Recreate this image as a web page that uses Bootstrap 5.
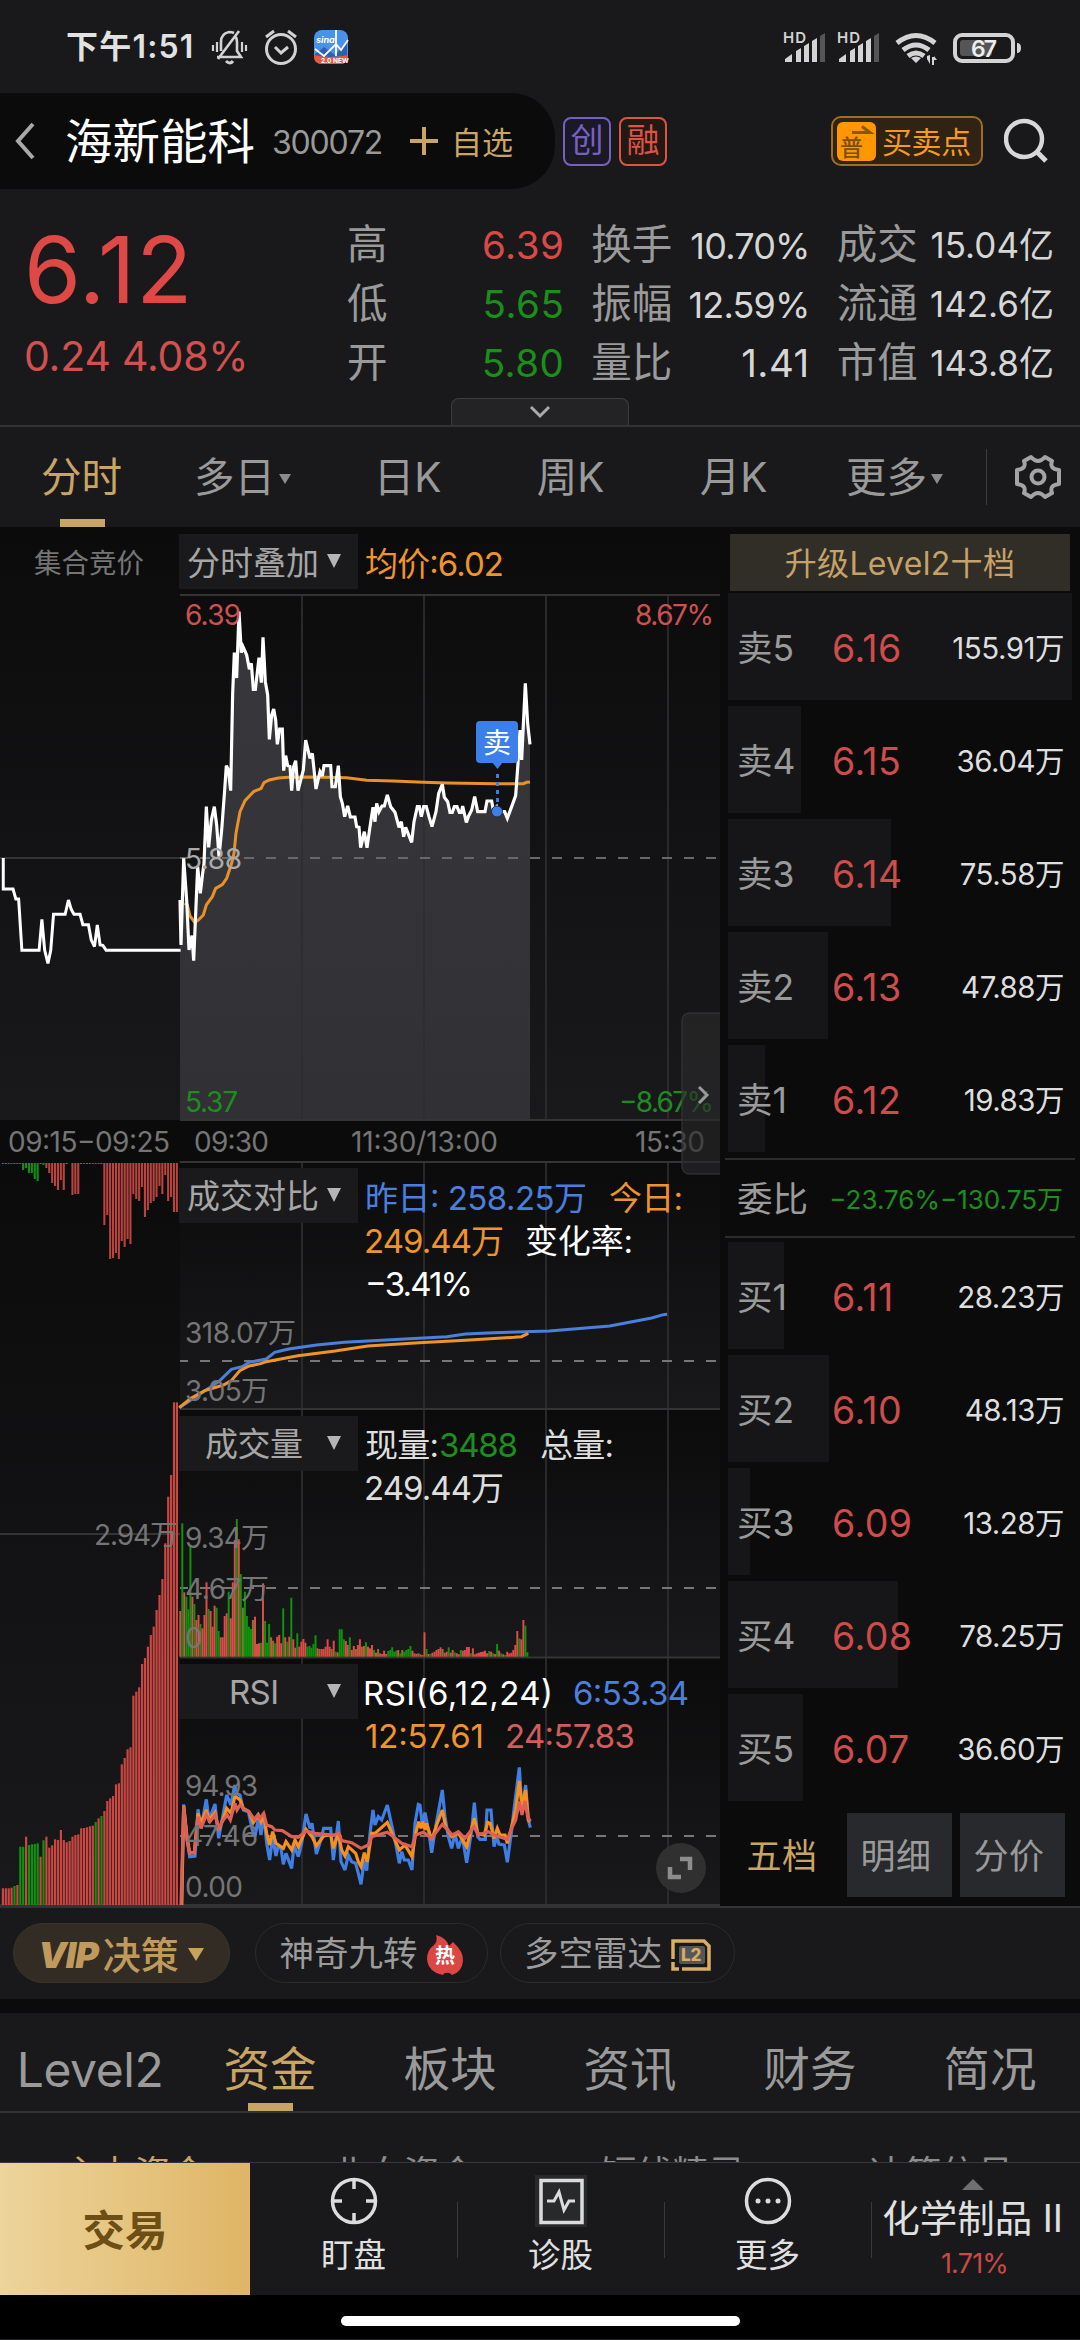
<!DOCTYPE html>
<html lang="zh-CN" data-bs-theme="dark">
<head>
<meta charset="utf-8">
<meta name="viewport" content="width=device-width, initial-scale=1">
<title>海新能科 300072</title>
<link href="https://cdn.jsdelivr.net/npm/bootstrap@5.3.0/dist/css/bootstrap.min.css" rel="stylesheet">
<style>
:root{--panel:#19191b;--deep:#0b0b0b;--gold:#c9a563;--up:#d94a47;--down:#1a8f1a;--muted:#9a9a9a;--rule:#333335}
body{width:1080px;height:2340px;overflow:hidden;background:var(--panel);color:#d6d6d6;font-family:Inter,"Noto Sans CJK SC",sans-serif;line-height:1}
svg{display:block;flex:none}
.up{color:var(--up)}.down{color:var(--down)}
.statusbar{height:93px;padding:1px 59px 0 66px}
.clock{font-size:32px;font-weight:600;color:#e2e2e2;letter-spacing:1.2px;width:142px;white-space:nowrap}
.titlebar{height:96px}
.title-pill{width:555px;background:#0b0b0b;border-radius:0 44px 44px 0;padding-left:14px;white-space:nowrap}
.stock-name{font-size:47.5px;color:#fff;margin-left:29px;width:207px;padding-top:2px}
.stock-code{font-size:32px;color:#999;width:138px;letter-spacing:-1.2px;padding-top:3px}
.watch{font-size:31px;margin-left:13px;padding-top:2px}
.tagbox{width:48px;height:49px;border:2px solid;border-radius:8px;font-size:33px;display:flex;align-items:center;justify-content:center;padding-bottom:1px}
.tag-c{color:#7562c0;background:#1b1926}.tag-r{color:#dc5541;background:#241817}
.trade-btn{width:152px;height:50px;border:2px solid #a06d22;border-radius:10px;background:#302314;color:#f79a1b;font-size:30px;letter-spacing:-.4px;padding:1px 0 0 4px;margin-right:21px}
.quote{height:236px;padding:24px 26px 0}
.price{font-size:92px;color:#de4946;letter-spacing:.8px;height:110px;line-height:110px;margin:2px 0 0 -2px}
.change{font-size:41px;color:#d2514e;letter-spacing:-.2px;margin:11px 0 0 -2px;white-space:pre}
.q-left{width:322px}
.q-col{font-size:38.5px;letter-spacing:.5px}
.q-col>div{height:59px;display:flex;justify-content:space-between;align-items:center;white-space:nowrap}
.q-col span:first-child{font-size:40.5px;letter-spacing:0;color:var(--muted)}
.q-col .sm36{font-size:36px;letter-spacing:-.8px}
.q-col .yi{font-size:35px;letter-spacing:0}
.expander{left:451px;bottom:0;width:178px;height:27px;border:1px solid #3c3c3e;border-bottom:0;border-radius:8px 8px 0 0;background:#232325}
.period{height:102px;border-top:2px solid var(--rule);font-size:40.5px;color:var(--muted)}
.period .tab{width:163px;position:relative;display:flex;align-items:center;justify-content:center;padding-top:3px}
.underbar::after{content:"";position:absolute;left:50%;bottom:0;width:45px;height:8px;margin-left:-22px;background:var(--gold)}
.caret{width:0;height:0;border:6px solid transparent;border-top:10px solid #8c8c8c;border-bottom:0;margin:0 4px 0 4px}
.board{height:1379px;background:var(--deep)}
.book{width:360px;padding:7px 8px 0;color:#dedede}
.upgrade{height:57px;margin:0 2px 2px;background:#312e28;color:#c6a168;font-size:32px;padding-top:2px;letter-spacing:.3px}
.lvl{height:107px;margin-bottom:6px;position:relative;padding:4px 8px 0 9px;font-size:29.5px}
.lvl i{position:absolute;left:0;top:0;bottom:0;background:#161618}
.lvl span{position:relative;white-space:nowrap}
.lvl .nm{width:95px;font-size:35.5px;color:var(--muted)}
.lvl .pr{font-size:37.5px;color:#ce4c49;letter-spacing:.4px;flex:1}
.lvl .vo{letter-spacing:-.5px}
.bidask{height:80px;border:solid #2c2c2e;border-width:2px 0;margin:1px -3px 4px;padding:4px 12px 0;font-size:26px;white-space:nowrap}
.bidask .nm{width:96px;font-size:35.5px;color:var(--muted)}
.book-tab{width:105px;height:84px;font-size:35px;letter-spacing:.6px;color:var(--muted);padding:3px 5px 0 0}
.book-tab.boxed{background:#28292d;padding-right:7px}
.gold,.book-tab.gold{color:var(--gold)}
.chips{height:93px;border-top:2px solid #333336;padding:15px 13px 0}
.chip{height:60px;border-radius:30px;border:1px solid #2b2b2e;font-size:34.5px;color:#9c9c9c;white-space:nowrap;padding-top:3px}
.chip.vip{width:217px;background:#322c24;color:#bf9a5c;border-color:#3c3324;margin-right:25px;font-weight:500;font-size:38px}
.vip b{font-style:italic;font-weight:900;font-size:36px;letter-spacing:-1px;margin-right:5px}
.sections{height:114px;border-top:14px solid var(--deep);border-bottom:2px solid var(--rule);font-size:46.5px;color:var(--muted)}
.sections .tab{width:180px;position:relative;display:flex;align-items:center;justify-content:center;padding-top:15px}
.sections .lv{font-size:48px;letter-spacing:-.4px;white-space:nowrap}
.subs{height:49px;overflow:hidden;font-size:36px;color:#8c8c8c;padding-top:43px}
.subs div{width:269px;text-align:center}
.dock{height:133px;border-top:1px solid #39393b;font-size:32.5px;color:#e0e0e0}
.deal{width:250px;background:linear-gradient(90deg,#edd49b,#dfb566);color:#6d4e15;font-size:42.5px;font-weight:700;padding-top:4px}
.dock-item{width:207px;position:relative;padding-top:12px;white-space:nowrap}
.dock-item+.dock-item::before{content:"";position:absolute;left:0;top:39px;width:1px;height:56px;background:#39393b}
.dock-label{margin-top:13px}
.home{height:44px;background:#000}
.home div{width:399px;height:10px;border-radius:5px;background:#fff;margin:21px auto 0}
</style>
<script src="https://cdn.jsdelivr.net/npm/bootstrap@5.3.0/dist/js/bootstrap.bundle.min.js"></script>
</head>
<body>
<header class="statusbar d-flex align-items-center">
  <div class="clock">下午1:51</div>
  <svg width="142" height="40" viewBox="0 0 142 40" fill="none" stroke="#d2d2d2" stroke-width="3">
    <path d="M9 30h24l-4-6V15c0-3-1-5-2-6M13 24V15c0-6 3-9 8-10q3 0 5 1M10 32L31 4" stroke-width="2.6"/><path d="M18 34q4 4 7 0"/><path d="M9 15v10M5 18v6M34 15v10M38 18v6" stroke-width="2.2"/>
    <circle cx="73" cy="22" r="14.5"/><path d="M58 10l8-6M88 10l-8-6M67 20l6 6 7-6"/>
    <g stroke="none"><rect x="106" y="3" width="34" height="34" rx="8" fill="#4a91ee"/><path d="M107 27l9-7 11 8 12-13v14l-32 2z" fill="#2d60b5"/><path d="M106 28q17 4 34 0v2q0 7-8 7h-18q-8 0-8-7z" fill="#e6593b"/></g>
    <path d="M107 22l9 7 12-12 5 6 7-10M128 3v26" stroke="#fff" stroke-width="1.8"/>
    <text x="108" y="16" font-size="9" font-style="italic" font-weight="700" fill="#fff" stroke="none">sina</text>
    <text x="113" y="36" font-size="6.5" font-weight="700" fill="#fff" stroke="none">2.0 NEW</text>
  </svg>
  <svg class="ms-auto" width="240" height="44" viewBox="780 24 240 44" fill="#d3d3d3">
    <g id="sig"><text x="782" y="42" font-size="15" font-weight="600" textLength="23">HD</text><path d="M784 61v-3l7-5v8zM795 61V50l5-3v14zM803 61V45l5-3v19zM811 61V40l5-3v24z"/><path d="M819 61V35l5-3v29z" fill="#555"/></g>
    <use href="#sig" x="54"/>
    <g fill="none" stroke="#d3d3d3" stroke-width="5"><path d="M896 42q19-15 38 0M902 49q13-10 26 0M907 55q8-6 16 0"/></g><path d="M910 57q5-3 10 0l-5 5zM926 55l3-1v9l-3-5zM931 56h2v-1l3 4h-3v5h-2z"/>
    <rect x="954" y="34" width="58" height="26" rx="7" fill="none" stroke="#d3d3d3" stroke-width="4"/><rect x="959" y="39" width="32" height="16" rx="3" fill="#555"/><path d="M1016 42q4 0 4 5t-4 5z"/>
    <text x="970" y="56" font-size="23" font-weight="600" fill="#eee" textLength="26">67</text>
  </svg>
</header>

<div class="titlebar d-flex align-items-center">
  <div class="title-pill h-100 d-flex align-items-center">
    <svg width="22" height="38" viewBox="0 0 22 38" fill="none" stroke="#a9a9a9" stroke-width="4"><path d="M19 2L4 19l15 17"/></svg>
    <div class="stock-name">海新能科</div><div class="stock-code">300072</div>
    <svg width="28" height="28" viewBox="0 0 28 28" stroke="#c9a563" stroke-width="4"><path d="M0 14h28M14 0v28"/></svg>
    <div class="watch gold">自选</div>
  </div>
  <div class="tagbox tag-c" style="margin-left:8px">创</div>
  <div class="tagbox tag-r" style="margin-left:8px">融</div>
  <div class="trade-btn ms-auto d-flex align-items-center">
    <svg width="39" height="39" viewBox="0 0 39 39"><rect width="39" height="39" rx="6" fill="#ff9800"/><path d="M15 10.500h18l-8-6" fill="none" stroke="#8a560e" stroke-width="3"/><text x="3" y="34" font-size="23" fill="#7d4d0c" font-weight="500">普</text></svg>
    <span style="margin-left:6px">买卖点</span>
  </div>
  <svg style="margin-right:32px" width="44" height="46" viewBox="0 0 44 46" fill="none" stroke="#d8d8d8" stroke-width="4.500"><circle cx="20" cy="21" r="18"/><path d="M33 34l9 9" stroke-width="5"/></svg>
</div>

<section class="quote position-relative d-flex">
  <div class="q-left"><div class="price">6.12</div><div class="change">0.24 4.08%</div></div>
  <div class="q-col" style="width:218px;padding-top:3px"><div><span>高</span><span class="up">6.39</span></div><div><span>低</span><span class="down">5.65</span></div><div><span>开</span><span class="down">5.80</span></div></div>
  <div class="q-col" style="width:219px;margin-left:27px;padding-top:3px"><div><span>换手</span><span class="sm36">10.70%</span></div><div><span>振幅</span><span class="sm36">12.59%</span></div><div><span>量比</span><span>1.41</span></div></div>
  <div class="q-col" style="width:218px;margin-left:27px;padding-top:3px"><div><span>成交</span><span class="yi">15.04亿</span></div><div><span>流通</span><span class="yi">142.6亿</span></div><div><span>市值</span><span class="yi">143.8亿</span></div></div>
  <div class="expander position-absolute d-flex justify-content-center align-items-center"><svg width="22" height="14" viewBox="0 0 22 14" fill="none" stroke="#aaa" stroke-width="3"><path d="M2 2l9 9 9-9"/></svg></div>
</section>

<nav class="period d-flex">
  <div class="tab gold underbar">分时</div><div class="tab">多日<span class="caret"></span></div><div class="tab">日K</div><div class="tab">周K</div><div class="tab">月K</div><div class="tab">更多<span class="caret"></span></div>
  <div class="ms-auto d-flex align-items-center" style="width:94px">
    <div style="width:1px;height:56px;background:#3c3c3e"></div>
    <svg style="margin-left:27px" width="48" height="48" viewBox="-24 -24 48 48" fill="none" stroke="#a4a4a4" stroke-width="4" stroke-linejoin="round"><path d="M-7-20Q0-12 7-20L14-16Q11-8 21-7V7Q11 8 14 16L7 20Q0 12-7 20L-14 16Q-11 8-21 7V-7Q-11-8-14-16Z"/><circle r="6.500"/></svg>
  </div>
</nav>

<main class="board d-flex">
<svg id="chart" width="720" height="1379" viewBox="0 527 720 1379" font-size="28">
  <defs>
    <linearGradient id="shade" x2="0" y2="1"><stop stop-color="#0b0b0c"/><stop offset="1" stop-color="#19191b"/></linearGradient>
    <linearGradient id="area" x2="0" y2="1"><stop stop-color="#38383c"/><stop offset="1" stop-color="#303035"/></linearGradient>
  </defs>
  <g fill="url(#shade)"><rect y="527" width="180" height="593"/><rect x="180" y="527" width="540" height="593"/><rect y="1163" width="180" height="743"/><rect x="180" y="1163" width="540" height="246"/><rect x="180" y="1411" width="540" height="246"/><rect x="180" y="1659" width="540" height="247"/></g>
  <g transform="translate(180 590) scale(.33333)"><path id="areaPath" fill="url(#area)"/></g>
  <g stroke="#2e2e31" stroke-width="2" opacity=".85"><path d="M302 595V1120M424 595V1120M546 595V1120M668 595V1120M302 1162V1906M424 1162V1906M546 1162V1906M668 1162V1906"/></g>
  <g stroke="#343437" stroke-width="2"><path d="M180 595H720M180 1120H720M180 1162H720M180 1409H720M180 1657.500H720M0 1905H720M0 858H180M0 1534H180"/></g>
  <g stroke="#77777a" stroke-width="2" stroke-dasharray="10 12" stroke-dashoffset="2"><path d="M180 858H718" stroke="#68686b"/><path d="M180 1361H718M180 1588H718M180 1836H718"/></g>
  <g id="bars"></g>
  <g fill="none" stroke-linejoin="miter" stroke-miterlimit="3">
    <g transform="translate(180 590) scale(.33333)"><polyline stroke="#e99128" stroke-width="9" points="14,940 22,945 30,978 44,997 55,990 70,975 79,945 97,920 107,895 127,884 140,865 155,820 162,790 168,730 180,665 195,632 222,604 243,596 252,578 268,570 295,564 325,562 400,561 500,563 560,571 640,573 730,577 800,579 950,581 1030,581 1040,577 1050,576"/>
    <polyline id="priceLine" stroke="#fff" stroke-width="9.500" points="0,930 3,1065 11,805 20,930 27,1080 36,1037 41,1112 53,830 61,910 68,850 72,820 79,650 86,772 94,690 103,650 110,705 117,800 125,720 134,600 139,527 145,540 152,602 158,310 163,188 170,264 177,65 184,188 189,170 200,195 208,238 214,220 220,298 226,298 237,203 244,278 249,142 256,275 263,315 268,448 275,375 281,357 287,390 292,463 299,417 307,417 311,542 317,497 323,527 330,530 335,602 341,530 347,512 354,602 370,540 377,450 390,505 397,490 408,597 420,545 427,558 432,527 452,527 456,590 466,590 475,527 481,620 487,640 494,680 503,648 511,681 525,681 530,710 537,712 542,773 553,725 561,773 570,710 579,652 585,695 590,640 597,665 606,648 613,648 622,615 632,650 645,667 657,712 664,695 671,740 677,712 695,757 702,695 712,650 718,650 724,680 731,650 739,650 747,680 756,710 768,665 776,610 787,583 793,622 803,635 810,667 817,667 823,650 831,650 838,667 844,667 848,648 859,697 866,678 875,660 884,620 893,665 915,665 921,633 935,633 940,660 950,650 955,665 974,665 982,685 995,650 1007,617 1014,520 1020,420 1025,510 1036,280 1043,400 1050,463"/></g>
    <g transform="translate(0 830) scale(.4655 .33333)"><polyline vector-effect="non-scaling-stroke" stroke="#fff" stroke-width="3" points="7,84 7,177 28,177 34,207 40,207 47,361 84,361 90,268 96,361 103,400 109,361 115,253 140,253 147,210 153,238 159,253 172,253 178,284 190,284 196,330 203,350 209,285 215,345 221,346 228,361 388,361"/></g>
    <g transform="translate(0 1150) scale(.4655 .33333)" stroke-width="3"><polyline vector-effect="non-scaling-stroke" stroke="#4a80dd" points="385,773 440,722 470,695 497,658 520,650 535,637 572,627 590,607 620,597 680,585 740,577 860,568 960,560 1000,552 1060,548 1180,543 1310,528 1400,504 1425,494 1433,493"/><polyline vector-effect="non-scaling-stroke" stroke="#f09427" points="385,773 410,745 440,722 480,705 497,692 515,662 535,648 560,641 572,635 640,617 720,603 790,588 900,578 1000,571 1105,562 1120,560 1135,550"/></g>
    <g transform="translate(175 1500) scale(.33333)" stroke-width="9.500">
      <polyline stroke="#3f7fe3" points="20,1215 26,913 34,1000 44,1070 60,1068 69,928 78,985 94,898 102,960 120,912 131,1015 143,950 155,885 168,915 179,855 185,880 195,885 205,930 220,935 232,990 240,1010 250,955 258,1005 266,940 275,1030 284,1080 293,1010 303,1068 309,1040 318,1045 325,1093 333,1060 350,1105 357,1035 370,1070 380,1030 393,942 405,985 411,970 424,1062 436,1025 446,985 467,985 475,1080 490,963 498,1085 510,1110 520,1065 530,1085 542,1090 550,1120 558,1153 568,1080 575,1112 585,1000 594,930 600,975 610,950 620,960 637,915 650,975 660,1020 673,1090 680,1055 688,1080 700,1080 711,1110 720,970 730,913 735,915 742,975 750,938 762,1000 770,1058 782,980 802,870 810,950 820,1010 830,1045 840,1000 850,1045 862,1010 875,1088 890,990 898,908 908,1010 915,1018 931,1018 936,930 948,930 957,1040 965,1010 972,1032 988,1035 997,1087 1010,990 1018,920 1033,802 1041,930 1052,855 1060,960 1066,983"/>
      <polyline stroke="#f6901e" points="20,1215 26,918 36,1010 44,1058 58,1058 69,940 78,970 94,930 102,960 120,938 131,990 145,955 155,925 168,940 180,888 195,900 205,925 222,935 235,968 250,945 258,965 266,948 275,1000 284,1035 293,995 303,1030 325,1045 333,1025 350,1050 360,1020 370,1040 393,988 411,1010 424,1038 446,1008 467,1005 475,1045 490,1000 500,1050 510,1068 520,1040 542,1060 550,1085 558,1100 568,1058 577,1085 590,1000 600,1000 637,967 655,1010 673,1050 690,1035 711,1070 722,1000 731,965 738,985 744,965 750,990 755,970 770,1020 785,975 802,930 812,980 830,1010 850,1000 860,1015 875,1040 898,955 908,1000 928,1005 938,967 946,970 957,1015 967,985 975,1005 990,1005 997,1030 1010,980 1022,930 1033,843 1041,920 1052,870 1060,960 1066,965"/>
      <polyline stroke="#dd6055" points="18,1215 26,920 36,1020 44,1060 58,1058 69,950 78,985 94,945 105,965 120,945 131,985 145,960 157,945 166,960 180,910 186,930 195,915 205,925 222,935 238,958 248,945 255,955 266,940 275,975 290,980 300,990 322,992 350,1010 370,1012 393,993 420,1000 450,1003 475,1005 492,1000 500,1022 530,1028 558,1045 580,1035 590,1010 637,997 655,1010 680,1030 711,1040 722,1005 745,997 770,1015 785,995 802,973 820,992 832,1005 850,995 870,1015 897,980 910,1005 940,995 957,1005 997,1018 1010,985 1022,960 1033,905 1041,945 1050,903 1058,950 1066,963"/>
    </g>
  </g>
  <g fill="#1a1a1c"><path d="M179 534H358V589H179zM179 1168H358V1223H179zM179 1416H358V1471H179zM179 1664H358V1719H179z"/></g>
  <path fill="#b5b5b5" d="M327 554h14l-7 14zM327 1188h14l-7 14zM327 1436h14l-7 14zM327 1684h14l-7 14z"/>
  <g fill="#757576"><text x="34" y="573" font-size="27.500" textLength="110">集合竞价</text>
    <text x="8" y="1152" textLength="162">09:15−09:25</text><text x="194" y="1152" textLength="75">09:30</text><text x="351" y="1152" textLength="147">11:30/13:00</text><text x="635" y="1152" textLength="70">15:30</text>
    <text x="185" y="1343" textLength="111">318.07万</text><text x="185" y="1401" textLength="84">3.05万</text><text x="94" y="1545" textLength="84">2.94万</text><text x="185" y="1548" textLength="84">9.34万</text><text x="185" y="1599" textLength="84">4.67万</text><text x="185" y="1648">0</text>
    <text x="185" y="1796" textLength="73">94.93</text><text x="185" y="1846" textLength="73">47.46</text><text x="185" y="1897" textLength="58">0.00</text></g>
  <g fill="#a6a6a6" font-size="33"><text x="187" y="575" textLength="132">分时叠加</text><text x="187" y="1208" textLength="132">成交对比</text><text x="205" y="1456" textLength="98">成交量</text><text x="229" y="1704" textLength="50">RSI</text></g>
  <g font-size="33"><g fill="#ef942b"><text x="365" y="576" textLength="139">均价:6.02</text><text x="609" y="1210" textLength="74">今日:</text><text x="364" y="1253" textLength="140">249.44万</text><text x="365" y="1748" textLength="119">12:57.61</text></g>
    <g fill="#4a80dd"><text x="365" y="1210" textLength="222" xml:space="preserve">昨日: 258.25万</text><text x="573" y="1705" textLength="116">6:53.34</text></g>
    <g fill="#fff"><text x="525" y="1253" textLength="108">变化率:</text><text x="365" y="1296" textLength="108">−3.41%</text><text x="363" y="1705" textLength="190">RSI(6,12,24)</text></g>
    <g fill="#dedede"><text x="365" y="1457" textLength="74">现量:</text><text x="540" y="1457" textLength="74">总量:</text><text x="364" y="1500" textLength="140">249.44万</text></g>
    <text x="439" y="1457" textLength="79" fill="#1a8f1a">3488</text><text x="505" y="1748" textLength="130" fill="#d05c5c">24:57.83</text></g>
  <g fill="#cc5250"><text x="185" y="625" textLength="56">6.39</text><text x="635" y="625" textLength="79">8.67%</text></g>
  <text x="185" y="869" textLength="57" fill="#aaa">5.88</text>
  <g fill="#1f8c20"><text x="185" y="1112" textLength="53">5.37</text><text x="619" y="1112" textLength="95">−8.67%</text></g>
  <rect x="476" y="721" width="42" height="42" rx="4" fill="#3d7fe8"/><path d="M492 762h11l-5.500 7z" fill="#3d7fe8"/><text x="483" y="753" font-size="28" fill="#fff">卖</text><path d="M497.500 774V806" stroke="#3f7fe3" stroke-width="3" stroke-dasharray="4 4"/><circle cx="497" cy="811.500" r="5.500" fill="#3f7fe3" stroke="#172a50"/>
  <path d="M722 1013H690q-8 0-8 8V1166q0 8 8 8H722z" fill="#29292b" fill-opacity=".65" stroke="#39393b"/><path d="M699 1087l8 8-8 8" fill="none" stroke="#9a9a9a" stroke-width="3"/>
  <circle cx="681" cy="1868" r="25" fill="#303030"/><path d="M680 1859h10v11M670 1867v10h11" fill="none" stroke="#8d8d8d" stroke-width="4.500"/>
</svg>

<aside class="book">
  <div class="upgrade d-flex align-items-center justify-content-center">升级Level2十档</div>
  <div class="lvl d-flex align-items-center"><i style="width:344px"></i><span class="nm">卖5</span><span class="pr">6.16</span><span class="vo">155.91万</span></div>
  <div class="lvl d-flex align-items-center"><i style="width:73px"></i><span class="nm">卖4</span><span class="pr">6.15</span><span class="vo">36.04万</span></div>
  <div class="lvl d-flex align-items-center"><i style="width:163px"></i><span class="nm">卖3</span><span class="pr">6.14</span><span class="vo">75.58万</span></div>
  <div class="lvl d-flex align-items-center"><i style="width:100px"></i><span class="nm">卖2</span><span class="pr">6.13</span><span class="vo">47.88万</span></div>
  <div class="lvl d-flex align-items-center"><i style="width:37px"></i><span class="nm">卖1</span><span class="pr">6.12</span><span class="vo">19.83万</span></div>
  <div class="bidask d-flex align-items-center down"><span class="nm">委比</span><span>−23.76%−130.75万</span></div>
  <div class="lvl d-flex align-items-center"><i style="width:56px"></i><span class="nm">买1</span><span class="pr">6.11</span><span class="vo">28.23万</span></div>
  <div class="lvl d-flex align-items-center"><i style="width:101px"></i><span class="nm">买2</span><span class="pr">6.10</span><span class="vo">48.13万</span></div>
  <div class="lvl d-flex align-items-center"><i style="width:22px"></i><span class="nm">买3</span><span class="pr">6.09</span><span class="vo">13.28万</span></div>
  <div class="lvl d-flex align-items-center"><i style="width:170px"></i><span class="nm">买4</span><span class="pr">6.08</span><span class="vo">78.25万</span></div>
  <div class="lvl d-flex align-items-center"><i style="width:75px"></i><span class="nm">买5</span><span class="pr">6.07</span><span class="vo">36.60万</span></div>
  <div class="d-flex gap-2" style="padding:6px 7px 0 4px">
    <div class="book-tab gold d-flex align-items-center justify-content-center">五档</div><div class="book-tab boxed ms-auto d-flex align-items-center justify-content-center">明细</div><div class="book-tab boxed d-flex align-items-center justify-content-center">分价</div>
  </div>
</aside>
</main>

<div class="chips d-flex">
  <div class="chip vip d-flex align-items-center justify-content-center"><b>VIP</b>决策<svg class="ms-2" width="18" height="14" viewBox="0 0 18 14"><path d="M1 0h16L9 13z" fill="#c9a15e"/></svg></div>
  <div class="chip d-flex align-items-center justify-content-center" style="width:233px;margin-right:12px">神奇九转
    <svg style="margin-left:8px" width="38" height="40" viewBox="0 0 38 40"><path d="M10 0q11 3 13 11l4-4q11 10 10 19-1 11-11 14-2-2-3-2-5-1-6 2Q2 37 1 24q0-9 7-14 4-4 2-10z" fill="#dc4643"/><text x="9" y="28" font-size="20" font-weight="700" fill="#fff">热</text></svg></div>
  <div class="chip d-flex align-items-center justify-content-center" style="width:235px">多空雷达
    <svg style="margin-left:9px" width="40" height="32" viewBox="0 0 40 32"><path d="M2 20V2h31l5 5v23H11M2 23v7h6" fill="none" stroke="#d9ad62" stroke-width="3.500"/><rect x="8" y="7" width="26" height="18" rx="2" fill="#55565a"/><text x="10" y="22" font-size="17" font-weight="800" fill="#d9ad62">L2</text></svg></div>
</div>

<nav class="sections d-flex">
  <div class="tab"><span class="lv">Level2</span></div><div class="tab gold underbar">资金</div><div class="tab">板块</div><div class="tab">资讯</div><div class="tab">财务</div><div class="tab">简况</div>
</nav>
<div class="subs d-flex"><div class="gold">主力资金</div><div>北向资金</div><div>短线精灵</div><div>决策信号</div></div>

<footer class="dock d-flex">
  <div class="deal d-flex align-items-center justify-content-center">交易</div>
  <div class="dock-item d-flex flex-column align-items-center">
    <svg width="52" height="52" viewBox="-26 -26 52 52" fill="none" stroke="#dcdcdc" stroke-width="3.500"><circle r="21.500"/><path d="M0-21v9M0 21v-9M-21 0h9M21 0h-9"/></svg><span class="dock-label">盯盘</span></div>
  <div class="dock-item d-flex flex-column align-items-center">
    <svg width="52" height="52" viewBox="-26 -26 52 52" fill="none" stroke="#dcdcdc" stroke-width="3.500"><path d="M-26-26h52v52h-52z" fill="#28292b" stroke="none"/><path d="M-20-20.500h41v42h-41z"/><path d="M-14 0h7l5-9 5 18 5-9h6" stroke-width="3"/></svg><span class="dock-label">诊股</span></div>
  <div class="dock-item d-flex flex-column align-items-center">
    <svg width="52" height="52" viewBox="-26 -26 52 52"><circle r="21.500" fill="none" stroke="#dcdcdc" stroke-width="3.500"/><g fill="#dcdcdc"><circle cx="-10" r="2.500"/><circle r="2.500"/><circle cx="10" r="2.500"/></g></svg><span class="dock-label">更多</span></div>
  <div class="dock-item d-flex flex-column align-items-center" style="padding:16px 4px 0 0">
    <svg width="22" height="11" viewBox="0 0 22 11"><path d="M0 11L11 0l11 11z" fill="#6f6f6f"/></svg><span style="font-size:37.500px;margin-top:10px">化学制品 Ⅱ</span><span style="font-size:27px;margin:12px 0 0 4px;letter-spacing:-.8px;color:#c94a48">1.71%</span></div>
</footer>
<div class="home d-flex"><div></div></div>

<script>
const red='#db4b47', green='#0d930d', olive='#86762c', dim='#b8433f';
const out=[];
const bar=(x,y,w,h,c)=>out.push(`<rect x="${x.toFixed(1)}" y="${y.toFixed(1)}" width="${w}" height="${h.toFixed(1)}" fill="${c}"/>`);
// Auction order imbalance, hanging from the top edge; a trailing g marks a green bar
'1 1 1 1g 1 1 1 7g 5g 10g 10g 16g 18g 1 2g 5 10 20 23 27 17 27 1 0 32 31 31 1 1g 1 1 1g 1g 1g 1 62 52 96 95 90 96 78 84 76 81 31 36 38 24 54 47 40 38 34 23 31 12 38 34 49 49'
 .split(' ').forEach((v,i)=>bar(1.8+i*2.9,1163,2.1,parseFloat(v),v.endsWith('g')?green:dim));
// Auction volume, rising from the bottom edge
'1165 1165 1165 1163 1158g 1155 1040g 1040g 1010 1035g 1033g 1032g 1030g 1070 1021g 1010 1043 1036 1018 1020 990 1020 1027 1023 1010 1005 1003 985 984 982 979 977 966g 955 948g 933 903 895 888 853 850 793 774 748 742 587 575 562 492 474 440 405 380 330 285 237 130 -10 -75 -293 -293'
 .split(' ').forEach((v,i)=>{const y=1500+parseFloat(v)/3;bar(1.8+i*2.9,y,2.2,1905-y,v.endsWith('g')?green:'#c94743')});
// Volume for each minute
'333r 70g 277r 290g 328g 140g 290r 312g 360r 345r 372g 385r 345r 247r 327g 333r 380r 317r 323g 393g 412r 412r 348r 340r 275g 355r 247r 120r 57g 118r 222g 323y 275g 348g 380g 387g 360y 350r 432r 430r 428g 250r 363g 428g 372g 412r 422y 430g 410r 405r 430r 325g 412r 425g 410r 293g 418r 443r 400g 440r 425r 417r 428r 440g 438g 443g 432g 406g 445r 447y 447r 447r 440r 418r 440r 447y 422r 455g 457r 388g 388g 418g 423r 435r 412g 450r 438r 447y 435r 418r 440y 438r 427g 440r 445r 435r 450g 458r 447y 460r 462r 452r 462r 453g 450g 442g 455g 452g 450r 460g 450y 455g 450g 447g 438g 452r 460r 462r 460y 463r 465r 397r 447g 462r 462g 458r 455r 450r 447r 442r 447y 458r 455r 442g 458r 450r 457g 460r 463r 450g 452r 450r 441r 441r 460g 445r 463r 460r 458r 456r 455r 452r 460r 453g 455r 460g 462r 432g 452r 460g 463r 465g 455r 460r 458r 450r 435r 393r 415g 418r 360r 377g 457g'
 .split(' ').forEach((v,i)=>{const y=1500+parseFloat(v)/3;bar(179.3+i*2.018,y,2,1656.7-y,{r:red,g:green,y:olive}[v.slice(-1)])});
document.getElementById('bars').innerHTML=out.join('');
// The shaded area follows the price line down to the panel's lower edge
document.getElementById('areaPath').setAttribute('d','M0,1590 L'+document.getElementById('priceLine').getAttribute('points')+' L1050,1590Z');
</script>
</body>
</html>
